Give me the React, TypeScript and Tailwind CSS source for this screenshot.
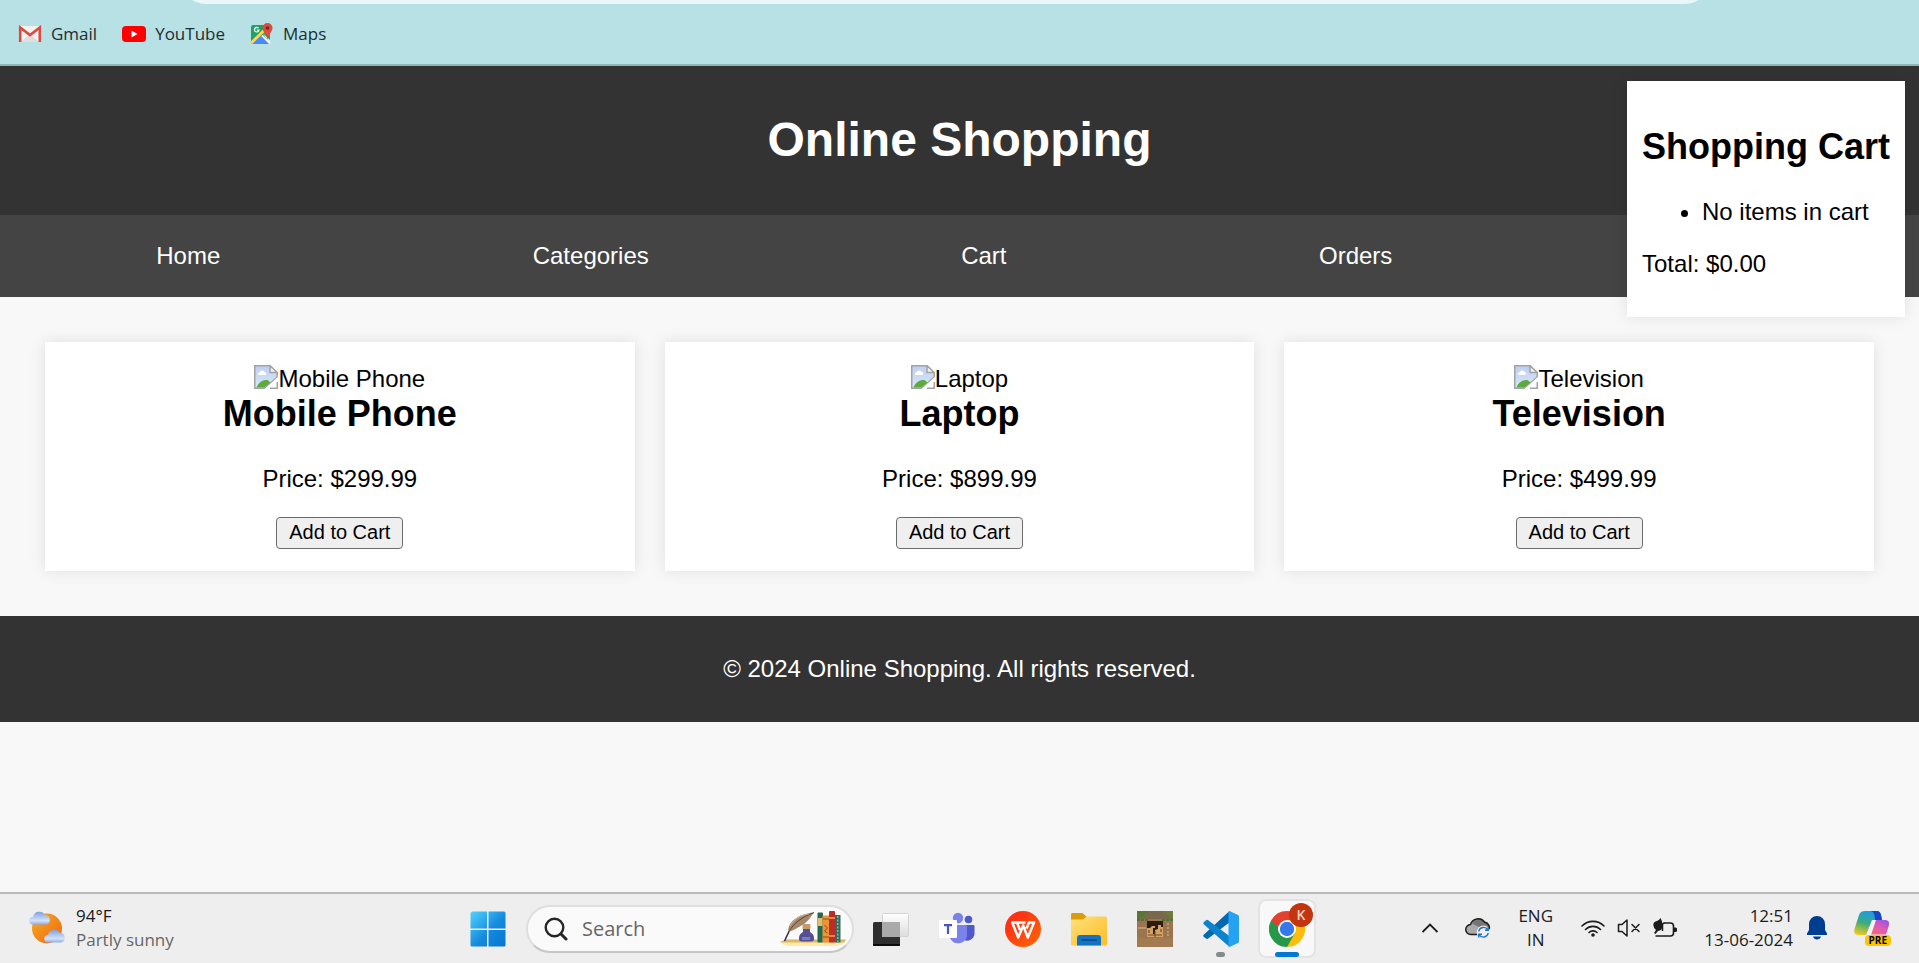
import React from "react";

const products = [
  { name: "Mobile Phone", price: "$299.99" },
  { name: "Laptop", price: "$899.99" },
  { name: "Television", price: "$499.99" },
];

function GmailIcon() {
  return (
    <svg viewBox="0 0 24 18" className="h-[18px] w-6">
      <rect x="1" y="1" width="22" height="16" rx="1" fill="#f2f2f2" />
      <path d="M3 17 12 9l9 8z" fill="#dedede" />
      <path d="M2.2 17V2.5L12 10l9.800-7.500V17" fill="none" stroke="#db4a3f" strokeWidth="2.600" />
    </svg>
  );
}

function YouTubeIcon() {
  return (
    <svg viewBox="0 0 24 18" className="h-[18px] w-6">
      <rect y="1" width="24" height="16" rx="4" fill="#f00" />
      <path d="M9.500 5.500v7L15.500 9z" fill="#fff" />
    </svg>
  );
}

function MapsIcon() {
  return (
    <svg viewBox="0 0 24 24" className="size-6">
      <rect x="1" y="3" width="19" height="19" rx="2" fill="#1ea362" />
      <path d="M2 22 11 13l9 9z" fill="#4a89f3" />
      <path d="M13 11.500 20 18v4z" fill="#e8e8e8" />
      <path d="M1.200 21 14.500 8" stroke="#ffd84a" strokeWidth="3" />
      <path d="M12 13.500 20 21.500" stroke="#f1f1f1" strokeWidth="2" />
      <path d="M17.500 1a5 5 0 0 0-5 5c0 4 4 5 5 12 1-7 5-8 5-12a5 5 0 0 0-5-5z" fill="#de4b3e" />
      <circle cx="17.500" cy="6" r="1.800" fill="#7d251d" />
      <path d="M8.500 6.200a2.300 2.300 0 1 0 .5 2H6.800" fill="none" stroke="#fff" strokeWidth="1.200" />
    </svg>
  );
}

function BrokenImageIcon() {
  return (
    <svg viewBox="0 0 24 24" className="size-6 shrink-0">
      <defs>
        <linearGradient id="sky" x1="0" y1="0" x2="0" y2="1">
          <stop offset="0" stopColor="#bcd0f3" />
          <stop offset="1" stopColor="#dbe6fa" />
        </linearGradient>
      </defs>
      <path d="M.75.75H16L23.250 8v4L10.500 23.250H.75z" fill="url(#sky)" stroke="#a3a3a3" strokeWidth="1.500" />
      <path d="M16 .75V7.500h7.250z" fill="#f2f2f2" stroke="#a3a3a3" strokeWidth="1.500" />
      <path d="M4 9a2 2 0 0 1 2-2 2.300 2.300 0 0 1 4.300 0A1.500 1.500 0 0 1 11 10H5a1 1 0 0 1-1-1z" fill="#fff" />
      <path d="M2.500 22.500C4.500 17 9 14.500 13.500 15l3 2.500-6 5z" fill="#5aad3c" />
      <path d="M10.500 24 24 12v4.500L15.500 24z" fill="#fff" />
      <path d="M16 23.250h7.250V17" fill="none" stroke="#a3a3a3" strokeWidth="1.500" />
    </svg>
  );
}

function WeatherIcon() {
  return (
    <svg viewBox="0 0 36 36" className="size-9">
      <defs>
        <linearGradient id="sun" x1="0" y1="0" x2="1" y2="1">
          <stop offset="0" stopColor="#f5ae24" />
          <stop offset="1" stopColor="#ee6510" />
        </linearGradient>
        <linearGradient id="cloud" x1="0" y1="0" x2="0" y2="1">
          <stop offset="0" stopColor="#7f9fe0" />
          <stop offset="0.700" stopColor="#d3e2fa" />
          <stop offset="1" stopColor="#8facea" />
        </linearGradient>
      </defs>
      <circle cx="18" cy="18.500" r="15" fill="url(#sun)" />
      <path d="M4 14.500a3.700 3.700 0 0 1 0-7.500 6.500 6.500 0 0 1 12-2A4.800 4.800 0 0 1 17 14.500z" fill="url(#cloud)" />
      <path d="M19 32.500a3.700 3.700 0 0 1 0-7.500 6.500 6.500 0 0 1 12-2A4.800 4.800 0 0 1 32 32.500z" fill="url(#cloud)" />
    </svg>
  );
}

function WindowsIcon() {
  return (
    <svg viewBox="0 0 36 36" className="size-9">
      <defs>
        <linearGradient id="win" x1="0" y1="0" x2="1" y2="1">
          <stop offset="0" stopColor="#50d3ff" />
          <stop offset="0.550" stopColor="#168ade" />
          <stop offset="1" stopColor="#0275d2" />
        </linearGradient>
      </defs>
      <path d="M2 .5h15v17H.5V2zM18.500.5H34a1.500 1.500 0 0 1 1.500 1.500v15.500h-17zM.5 19H17v16.500H2A1.500 1.500 0 0 1 .5 34zM18.500 19h17v15a1.500 1.500 0 0 1-1.500 1.500H18.500z" fill="url(#win)" />
    </svg>
  );
}

function SearchIcon() {
  return (
    <svg viewBox="0 0 24 24" className="size-6">
      <circle cx="10.500" cy="10.500" r="8.800" fill="none" stroke="#262626" strokeWidth="2.400" />
      <path d="M17 17l5 5" stroke="#262626" strokeWidth="3" strokeLinecap="round" />
    </svg>
  );
}

function BooksIcon() {
  return (
    <svg viewBox="0 0 66 36" className="h-9 w-[66px]">
      <path d="M0 31l6-2.500h60c-1 4-5 6-10 6.500H8q-5-1-8-4z" fill="#ffe9a8" />
      <path d="M0 31l6-2.500h60l-2 3H3z" fill="#dab964" />
      <path d="M8.500 21C7 12 17 3 34 1.500C31 5 28 11 23 13.500 18 17 14 19 8.500 21z" fill="#a4866a" />
      <path d="M8.500 21C14 12 22 6 34 1.500" fill="none" stroke="#5b4633" strokeWidth="1" />
      <path d="M10 15C14 8 21 4 29 3" fill="none" stroke="#cbb396" strokeWidth="1" />
      <path d="M4.500 30l4.500-9.500" stroke="#342b5e" strokeWidth="1.600" />
      <rect x="22.500" y="13" width="8" height="5" rx="1" fill="#c59b6d" />
      <path d="M23 18h7v3q4 2 4 6v1q0 2.500-3 2.500h-9q-3 0-3-2.500v-1q0-4 4-6z" fill="#554f96" />
      <path d="M22 26h8v3h-8z" fill="#8079bd" />
      <rect x="37.500" y="1.500" width="5.500" height="30" rx="1" fill="#23694f" />
      <rect x="38" y="7" width="4.500" height="8" fill="#e0bd70" />
      <rect x="42.500" y="4.500" width="7" height="27" fill="#ef9339" />
      <path d="M43 8h6M43 26h6M44.500 14l3 3-3 3 3 2" stroke="#8a4c1b" strokeWidth="1" fill="none" />
      <rect x="49" y="0" width="6" height="31.500" rx="1" fill="#bf2b25" />
      <path d="M49 7h6M49 25h6" stroke="#f0a84d" strokeWidth="1.500" />
      <rect x="55" y="4" width="5.500" height="27.500" fill="#2e6d67" />
      <path d="M57.800 5v26" stroke="#b3ae69" strokeWidth="1.500" strokeDasharray="2 1.500" />
    </svg>
  );
}

function TaskViewIcon() {
  return (
    <svg viewBox="0 0 36 36" className="size-9">
      <defs>
        <linearGradient id="pane" x1="0" y1="0" x2="0" y2="1">
          <stop offset="0" stopColor="#fff" />
          <stop offset="1" stopColor="#dcdcdc" />
        </linearGradient>
      </defs>
      <rect x="0" y="11" width="27" height="24" rx="1.500" fill="#2e2e2e" />
      <path d="M0 33h27v1a1 1 0 0 1-1 1H1a1 1 0 0 1-1-1z" fill="#0c0c0c" />
      <rect x="9.500" y="2.500" width="26" height="23" rx="1" fill="url(#pane)" stroke="#d5d5d5" />
      <path d="M9 11h18v15H9z" fill="#a9a9a9" />
    </svg>
  );
}

function TeamsIcon() {
  return (
    <svg viewBox="0 0 36 36" className="size-9">
      <circle cx="29.500" cy="8.500" r="3.800" fill="#5059c9" />
      <path d="M24 14h10.500q1 0 1 1v7.500a7.500 7.500 0 0 1-11.500 6z" fill="#5059c9" />
      <circle cx="19" cy="7" r="5.200" fill="#7b83eb" />
      <path d="M11 14h15.500q1.500 0 1.500 1.500V25a9 9 0 0 1-17 2z" fill="#7b83eb" />
      <rect x="0" y="9" width="18" height="18" rx="1" fill="#fff" />
      <path d="M5 14.200h8M9 14v9" stroke="#4b53bc" strokeWidth="2.200" />
    </svg>
  );
}

function WpsIcon() {
  return (
    <svg viewBox="0 0 36 36" className="size-9">
      <defs>
        <linearGradient id="wps" x1="0" y1="0" x2="1" y2="1">
          <stop offset="0" stopColor="#ff1f1a" />
          <stop offset="1" stopColor="#ff6a05" />
        </linearGradient>
      </defs>
      <circle cx="18" cy="18" r="18" fill="url(#wps)" />
      <path d="M20.500 11.500H7.200L13.200 26.500 18.200 14.500 22.800 26.500 29 11.500H24L21.500 17.500M12.200 12l2.700 7" fill="none" stroke="#fff" strokeWidth="2.500" strokeLinejoin="round" />
    </svg>
  );
}

function FolderIcon() {
  return (
    <svg viewBox="0 0 36 36" className="size-9">
      <defs>
        <linearGradient id="folder" x1="0" y1="0" x2="1" y2="1">
          <stop offset="0" stopColor="#ffe17c" />
          <stop offset="1" stopColor="#fbbd24" />
        </linearGradient>
      </defs>
      <path d="M0 3.500Q0 2 1.500 2h10l4 3.500V12H0z" fill="#dc9c05" />
      <path d="M0 8.500h12l3.500-3H34.500Q36 5.500 36 7v26q0 1.500-1.500 1.500h-33Q0 34.500 0 33z" fill="url(#folder)" />
      <path d="M6 34.500V27q0-3 3-3h18q3 0 3 3v7.500z" fill="#1173c5" />
      <path d="M11 29h14" stroke="#0b4f8f" strokeWidth="2" strokeLinecap="round" />
    </svg>
  );
}

function GameIcon() {
  return (
    <svg viewBox="0 0 36 36" className="size-9">
      <rect width="36" height="36" fill="#9a7550" />
      <path d="M0 0h36v8H0z" fill="#77694a" />
      <path d="M0 0h12L0 10z" fill="#557836" />
      <path d="M36 0H26l10 9z" fill="#6d7b3b" />
      <path d="M0 9h11M25 9h11" stroke="#477735" strokeWidth="2" strokeDasharray="3 1" />
      <rect x="10" y="10" width="16" height="16" fill="#d2a166" />
      <path d="M10 10h16v6h-2v-2h-3v4l-3 1v4h-2v-6h2v-2h-3l-2 2h-3z" fill="#2d1b13" />
      <path d="M12 19v3M24 18v3" stroke="#5a3823" strokeWidth="1" />
      <path d="M18 20v6M11 24h14" stroke="#6f4b2d" strokeWidth="1" />
      <path d="M1 17h8M30 13h2M30 17h2M30 21h2M30 24h2" stroke="#c9a272" strokeWidth="1.500" />
      <rect y="27" width="36" height="9" fill="#a47a50" />
    </svg>
  );
}

function CodeIcon() {
  return (
    <svg viewBox="0 0 36 36" className="size-9">
      <path d="M26.500 0 1 23.500q-1.500 1.200 0 2.500L3 27.500q1 .8 2.200 0L27 11z" fill="#0069b0" />
      <path d="M5.200 9.200Q4 8.300 3 9.200L1 11q-1.500 1.300 0 2.500L26.500 36 27 25.500z" fill="#0c83cc" />
      <path d="M26.500 0l8.500 4q1 .5 1 1.800v24.400q0 1.300-1 1.800l-8.500 4q-1 0-1-1.500v-33Q25.500 0 26.500 0z" fill="#26a2f3" />
    </svg>
  );
}

function ChromeIcon() {
  return (
    <svg viewBox="0 0 36 36" className="size-9">
      <path d="M18 18 2.410 9A18 18 0 0 1 33.590 9z" fill="#e3402f" />
      <path d="M18 18 33.590 9A18 18 0 0 1 18 36z" fill="#fdbd0a" />
      <path d="M18 18v18A18 18 0 0 1 2.410 9z" fill="#26984a" />
      <path d="M18 9h15.590L25.800 22.500z" fill="#fdbd0a" />
      <path d="M25.800 22.500 18 36 10.200 22.500z" fill="#26984a" />
      <path d="M10.200 22.500 2.410 9 18 9z" fill="#e3402f" />
      <path d="M2.410 9 10.200 22.500 13 20z" fill="#26984a" />
      <circle cx="18" cy="18" r="9" fill="#fff" />
      <circle cx="18" cy="18" r="7.200" fill="#3478ec" />
    </svg>
  );
}

function SyncCloudIcon() {
  return (
    <svg viewBox="0 0 26 22" className="h-[22px] w-[26px]">
      <path d="M6 17.500a5 5 0 0 1-.5-10A8 8 0 0 1 19.500 5 6 6 0 0 1 24 13q-1 4.500-4 4.500z" fill="#a9a9a9" />
      <path d="M7 6.500Q13-2 19.500 5q4 1 4.500 5l-8 1z" fill="#757575" />
      <path d="M6 17.500a5 5 0 0 1-.5-10A8 8 0 0 1 19.500 5 6 6 0 0 1 24 13q-1 4.500-4 4.500z" fill="none" stroke="#1e1e1e" strokeWidth="1.500" />
      <circle cx="18.500" cy="15.200" r="6.800" fill="#eee" />
      <path d="M13.800 14.500A4.800 4.800 0 0 1 22.800 13M23.200 16A4.800 4.800 0 0 1 14.200 17.500M23.200 10v3.200H20M13.800 20.500v-3.200H17" fill="none" stroke="#1b74ca" strokeWidth="1.400" />
    </svg>
  );
}

function WifiIcon() {
  return (
    <svg viewBox="0 0 24 18" className="h-[18px] w-6" fill="none" stroke="#1b1b1b" strokeWidth="1.600" strokeLinecap="round">
      <path d="M1 7a15.500 15.500 0 0 1 22 0M4.500 10.500a10.600 10.600 0 0 1 15 0M8 13.500a5.700 5.700 0 0 1 8 0" />
      <circle cx="12" cy="16" r="1.800" fill="#1b1b1b" stroke="none" />
    </svg>
  );
}

function MutedIcon() {
  return (
    <svg viewBox="0 0 24 18" className="h-[18px] w-6" fill="none" stroke="#1b1b1b" strokeWidth="1.500" strokeLinejoin="round" strokeLinecap="round">
      <path d="M1.500 5.500h3.500l5-4.500v16l-5-4.500H1.500zM15 5.500l7 7M22 5.500l-7 7" />
    </svg>
  );
}

function BatteryIcon() {
  return (
    <svg viewBox="0 0 24 20" className="h-5 w-6">
      <path d="M11 5h6.500q3 0 3 3v7q0 3-3 3H2.500" fill="none" stroke="#1b1b1b" strokeWidth="1.600" />
      <path d="M20.500 9.500h2q1.500 0 1.500 1.500v1.500q0 1.500-1.500 1.500h-2z" fill="#1b1b1b" />
      <path d="M7.500 0Q10 4 9.500 8.500 9 12.500 5 13L2.500 16 1 15l2-3Q-1 8 1 4.500q1.500-1.500 3-1.500Q6.500 2 7.500 0z" fill="#1b1b1b" />
      <path d="M9.500 13V7q0-2 2-2" fill="none" stroke="#1b1b1b" strokeWidth="1.500" />
    </svg>
  );
}

function BellIcon() {
  return (
    <svg viewBox="0 0 20 24" className="h-6 w-5" fill="#003e92">
      <path d="M10 0a8 8 0 0 0-8 8v6L0 17.500V19h20v-1.500L18 14V8a8 8 0 0 0-8-8zM6 20.500h8Q13 23.500 10 23.500T6 20.500z" />
    </svg>
  );
}

function CopilotIcon() {
  return (
    <svg viewBox="0 0 36 36" className="size-9">
      <defs>
        <linearGradient id="copA" x1="0.500" y1="0" x2="0.200" y2="1">
          <stop offset="0" stopColor="#1b9de8" />
          <stop offset="0.500" stopColor="#3dab7b" />
          <stop offset="1" stopColor="#f2cb1c" />
        </linearGradient>
        <linearGradient id="copB" x1="1" y1="0" x2="0.200" y2="1">
          <stop offset="0" stopColor="#8c53ee" />
          <stop offset="0.500" stopColor="#dd5bb5" />
          <stop offset="1" stopColor="#fb6b65" />
        </linearGradient>
      </defs>
      <path d="M11 1h12q3 0 4 4l1 5h-8l-6 15H5q-6 0-4.500-6L5 5q1.500-4 6-4z" fill="url(#copA)" />
      <path d="M17 1h6q3 0 4 4l1 5h-7q0-8-4-9z" fill="#1645c7" />
      <path d="M20 10h10.500q5.500 0 4.500 5l-3 9.500H12z" fill="url(#copB)" />
      <path d="M18 10h4l-5 15h-5z" fill="#f4f4f4" />
    </svg>
  );
}

function TaskButton({ label, children }: { label: string; children: React.ReactNode }) {
  return (
    <button type="button" aria-label={label} className="flex h-[59px] w-[58px] items-center justify-center">
      {children}
    </button>
  );
}

export default function App() {
  return (
    <div className="flex min-h-screen flex-col bg-[#f8f8f8] font-['Liberation_Sans',Arial,sans-serif] text-2xl leading-7 text-black">
      <div className="relative h-[66px] overflow-hidden border-b-2 border-[#91b4b7] bg-[#b7e1e4] font-['Open_Sans','Noto_Sans',sans-serif] text-[17px] leading-6 text-[#1f2d30]">
        <div className="absolute -top-12 right-[208px] left-[180px] h-[52px] rounded-full bg-[#e9f7f8]" />
        <nav aria-label="Bookmarks" className="flex h-full items-center gap-[25px] px-[18px] pt-1">
          <a href="#gmail" className="flex items-center gap-[9px]"><GmailIcon />Gmail</a>
          <a href="#youtube" className="flex items-center gap-[9px]"><YouTubeIcon />YouTube</a>
          <a href="#maps" className="flex items-center gap-[9px]"><MapsIcon />Maps</a>
        </nav>
      </div>

      <div className="relative flex flex-1 flex-col">
        <header className="bg-[#333] px-4 pt-[47px] pb-[49px] text-center text-white">
          <h1 className="text-5xl leading-[53px] font-bold">Online Shopping</h1>
        </header>
        <nav aria-label="Main" className="bg-[#444] py-[27px] text-white">
          <ul className="flex justify-around">
            <li><a href="#home">Home</a></li>
            <li><a href="#categories">Categories</a></li>
            <li><a href="#cart">Cart</a></li>
            <li><a href="#orders">Orders</a></li>
            <li className="w-[58px]" />
          </ul>
        </nav>

        <aside id="cart" className="absolute top-[15px] right-[14px] bg-white p-[15px] shadow-[0_0_15px_rgba(0,0,0,0.1)]">
          <h2 className="mt-[30px] text-4xl leading-[42px] font-bold">Shopping Cart</h2>
          <ul className="mt-[30px] mb-6 list-disc pl-[60px]">
            <li>No items in cart</li>
          </ul>
          <p className="mb-6">Total: $0.00</p>
        </aside>

        <main className="grid grid-cols-3 gap-[30px] p-[45px]">
          {products.map((p) => (
            <article key={p.name} className="flex flex-col items-center bg-white px-6 pt-[23px] pb-[22px] text-center shadow-[0_0_15px_rgba(0,0,0,0.1)]">
              <div className="flex h-7 items-start">
                <BrokenImageIcon />
                <span>{p.name}</span>
              </div>
              <h2 className="text-4xl leading-[42px] font-bold">{p.name}</h2>
              <p className="mt-[30px] mb-6">Price: {p.price}</p>
              <button type="button" className="h-8 rounded-[4px] border border-[#6b6b6b] bg-[#efefef] px-3 pb-[2px] text-xl leading-6">
                Add to Cart
              </button>
            </article>
          ))}
        </main>

        <footer className="bg-[#333] py-[39px] text-center text-white">
          <p>© 2024 Online Shopping. All rights reserved.</p>
        </footer>
      </div>

      <div className="flex h-[71px] items-center border-t-2 border-[#b9b9b9] bg-[#eee] font-['Open_Sans','Noto_Sans',sans-serif] text-[17px] leading-6 text-[#1b1b1b]">
        <div className="flex w-[464px] items-center gap-[11px] pb-[2px] pl-[29px]">
          <WeatherIcon />
          <div>
            <p>94°F</p>
            <p className="text-[#666]">Partly sunny</p>
          </div>
        </div>

        <div className="flex items-center gap-2">
          <button type="button" aria-label="Start" className="mr-1.5 flex size-12 items-center justify-center"><WindowsIcon /></button>
          <label className="flex h-12 w-[328px] items-center gap-[14px] rounded-full border-2 border-[#dedede] border-b-[#c6c6c6] bg-[#fafafa] pr-1.5 pl-4">
            <SearchIcon />
            <input type="text" aria-label="Search" placeholder="Search" className="min-w-0 flex-1 bg-transparent text-xl outline-none placeholder:text-[#666]" />
            <BooksIcon />
          </label>
          <TaskButton label="Task view"><TaskViewIcon /></TaskButton>
          <TaskButton label="Teams"><TeamsIcon /></TaskButton>
          <TaskButton label="WPS Office"><WpsIcon /></TaskButton>
          <TaskButton label="File Explorer"><FolderIcon /></TaskButton>
          <TaskButton label="Game"><GameIcon /></TaskButton>
          <div className="relative">
            <TaskButton label="Code editor"><CodeIcon /></TaskButton>
            <span className="absolute bottom-px left-6 h-[5px] w-[9px] rounded-full bg-[#888]" />
          </div>
          <div className="relative rounded-lg bg-[#f8f8f8] inset-ring-2 inset-ring-[#e3e3e3]">
            <TaskButton label="Chrome"><ChromeIcon /></TaskButton>
            <span className="absolute top-1 right-[3px] flex size-6 items-center justify-center rounded-full bg-[#c3350f] text-sm font-semibold text-[#f5cfc2]">K</span>
            <span className="absolute bottom-px left-[17px] h-[5px] w-6 rounded-full bg-[#0078d4]" />
          </div>
        </div>

        <div className="ml-auto flex items-center pr-[29px] pb-[2px]">
          <svg viewBox="0 0 16 10" className="mr-[27px] h-[10px] w-4"><path d="M.5 9 8 1.500 15.500 9" fill="none" stroke="#1b1b1b" strokeWidth="1.900" /></svg>
          <SyncCloudIcon />
          <p className="mr-7 ml-[27px] text-center">ENG<br />IN</p>
          <div className="flex items-center gap-3">
            <WifiIcon />
            <MutedIcon />
            <BatteryIcon />
          </div>
          <p className="ml-6 w-[92px] text-right">12:51<br />13-06-2024</p>
          <span className="mr-[27px] ml-[14px]"><BellIcon /></span>
          <span className="relative">
            <CopilotIcon />
            <span className="absolute -right-px bottom-0 rounded-sm bg-[#fdc403] px-1 text-[10px] leading-[11px] font-bold text-black">PRE</span>
          </span>
        </div>
      </div>
    </div>
  );
}
